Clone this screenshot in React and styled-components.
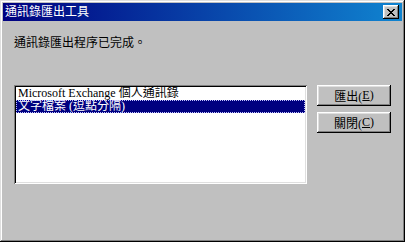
import styled, { createGlobalStyle } from "styled-components";

const GlobalStyle = createGlobalStyle`
  html, body {
    margin: 0;
    padding: 0;
    background: #ffffff;
  }
  * {
    box-sizing: border-box;
  }
`;

const CJK = `"Liberation Serif", "Noto Sans CJK TC", serif`;

export default function App() {
  return (
    <>
      <GlobalStyle />
      <Window>
        <TitleBar>
          <Title>通訊錄匯出工具</Title>
          <CloseButton aria-label="close">
            <svg width="8" height="7" viewBox="0 0 8 7">
              <path
                d="M0 0h2v1h1v1h2V1h1V0h2v1H7v1H6v1H5v1h1v1h1v1h1v1H6V6H5V5H3v1H2v1H0V6h1V5h1V4h1V3H2V2H1V1H0z"
                fill="#000"
              />
            </svg>
          </CloseButton>
        </TitleBar>

        <Body>
          <Message>通訊錄匯出程序已完成。</Message>
          <Row>
            <ListBox>
              <ListItem>Microsoft Exchange 個人通訊錄</ListItem>
              <ListItem $selected>文字檔案 (逗點分隔)</ListItem>
            </ListBox>
            <Buttons>
              <Button>
                匯出(<u>E</u>)
              </Button>
              <Button>
                關閉(<u>C</u>)
              </Button>
            </Buttons>
          </Row>
        </Body>
      </Window>
    </>
  );
}

const Window = styled.div`
  width: 405px;
  height: 242px;
  display: flex;
  flex-direction: column;
  padding: 3px;
  background: #c0c0c0;
  box-shadow: inset -1px -1px #000000, inset 1px 1px #dfdfdf,
    inset -2px -2px #808080, inset 2px 2px #ffffff;
`;

const TitleBar = styled.div`
  height: 18px;
  display: flex;
  align-items: center;
  justify-content: space-between;
  padding: 0 3px 0 2px;
  background: linear-gradient(to right, #000080, #1084d0);
`;

const Title = styled.span`
  font-family: ${CJK};
  font-size: 12px;
  line-height: 14px;
  color: #ffffff;
`;

const CloseButton = styled.div`
  width: 16px;
  height: 14px;
  display: flex;
  align-items: center;
  justify-content: center;
  background: #c0c0c0;
  box-shadow: inset -1px -1px #000000, inset 1px 1px #ffffff,
    inset -2px -2px #808080, inset 2px 2px #dfdfdf;
`;

const Body = styled.div`
  flex: 1;
  display: flex;
  flex-direction: column;
  padding: 14px 11px 0 11px;
`;

const Message = styled.div`
  font-family: ${CJK};
  font-size: 12px;
  line-height: 16px;
  color: #000000;
`;

const Row = styled.div`
  display: flex;
  align-items: flex-start;
  margin-top: 34px;
`;

const ListBox = styled.div`
  width: 293px;
  height: 99px;
  padding: 2px;
  background: #ffffff;
  box-shadow: inset 1px 1px #808080, inset -1px -1px #ffffff,
    inset 2px 2px #000000, inset -2px -2px #dfdfdf;
`;

const ListItem = styled.div`
  height: 13px;
  padding-left: 2px;
  font-family: ${CJK};
  font-size: 12px;
  line-height: 13px;
  white-space: nowrap;
  color: ${(p) => (p.$selected ? "#ffffff" : "#000000")};
  background: ${(p) => (p.$selected ? "#000080" : "transparent")};
  outline: ${(p) => (p.$selected ? "1px dotted #c0c0ff" : "none")};
  outline-offset: -1px;
`;

const Buttons = styled.div`
  display: flex;
  flex-direction: column;
  gap: 6px;
  margin-left: 10px;
`;

const Button = styled.div`
  width: 74px;
  height: 21px;
  display: flex;
  align-items: center;
  justify-content: center;
  font-family: ${CJK};
  font-size: 12px;
  color: #000000;
  background: #c0c0c0;
  box-shadow: inset -1px -1px #000000, inset 1px 1px #ffffff,
    inset -2px -2px #808080, inset 2px 2px #dfdfdf;

  u {
    text-decoration: underline;
  }
`;
